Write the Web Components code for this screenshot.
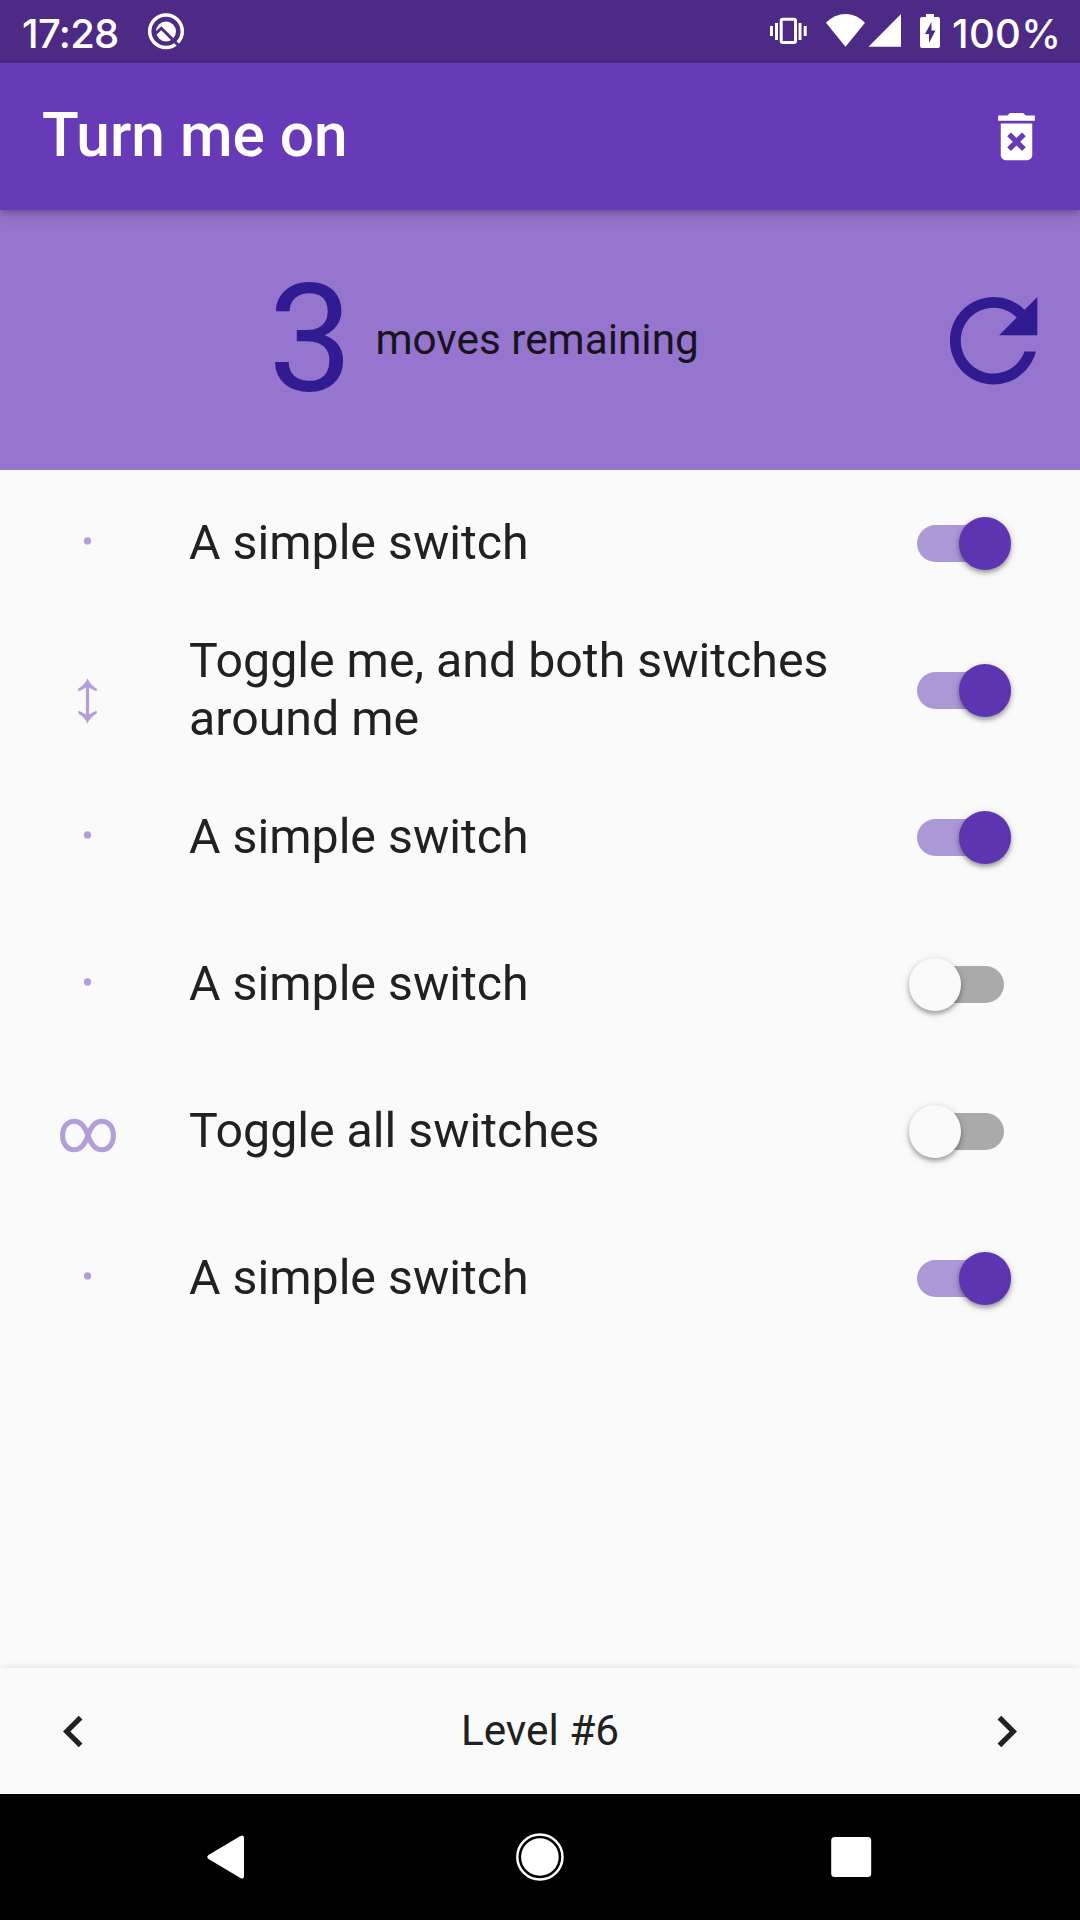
<!DOCTYPE html>
<html lang="en">
<head>
<meta charset="utf-8">
<title>Turn me on</title>
<style>
html,body{margin:0;padding:0;background:#fafafa}
body{font-family:Roboto,sans-serif;color:#212121}
</style>
</head>
<body>
<puzzle-app></puzzle-app>
<script>
const define = (name, html) => customElements.define(name, class extends HTMLElement {
  constructor() {
    super();
    this.attachShadow({mode: 'open'}).innerHTML = html;
  }
});

define('status-bar', `<style>
:host{display:flex;height:63px;background:#4d2a86;color:#fff;font:500 40px/63px Inter,sans-serif;box-sizing:border-box;padding:1.5px 22px 0 22px;flex:none}
svg{display:block;margin-top:-1.5px;flex:none}
.time{width:125px;letter-spacing:-.7px;white-space:nowrap}
.pct{letter-spacing:.3px;width:106px;white-space:nowrap}
.space{flex:1}
</style>
<span class="time">17:28</span>
<svg width="38" height="63" viewBox="147 0 38 63"><circle cx="166" cy="31.2" r="16.300" fill="none" stroke="#fff" stroke-width="3.500"/><circle cx="166" cy="31.500" r="10" fill="#fff"/><path d="M153.500 35.500L161.300 28.200L179.500 46.400" fill="none" stroke="#4d2a86" stroke-width="2.900"/></svg>
<span class="space"></span>
<svg width="183" height="63" viewBox="769 0 183 63" fill="#fff"><rect x="781.2" y="19.2" width="14.3" height="23.3" rx="1.5" fill="none" stroke="#fff" stroke-width="3"/><path d="M775 23h3v17h-3zM770 26h3v10h-3zM798.5 23h3v17h-3zM803.7 26h3v10h-3z"/><path d="M826 22.7Q834.5 14 845.5 14T865 22.7L845.5 46.7Z"/><path d="M868.5 46.7H901V14Z"/><path fill-rule="evenodd" d="M926 14h8v3h4a2 2 0 0 1 2 2v27a2 2 0 0 1-2 2h-16a2 2 0 0 1-2-2V19a2 2 0 0 1 2-2h4ZM931.5 22L925 34h4v9l6.5-12.5h-4Z"/></svg>
<span class="pct">100%</span>`);

define('app-bar', `<style>
:host{display:flex;height:147px;background:#673ab7;color:#fff;align-items:center;justify-content:space-between;box-sizing:border-box;padding:0 32px 0 42px;position:relative;z-index:1;box-shadow:0 3px 5px rgba(0,0,0,.19),0 5px 13px rgba(0,0,0,.13);flex:none}
h1{font:500 60.4px/71px Roboto,sans-serif;margin:-2px 0 0;white-space:nowrap}
svg{display:block}
</style><h1><slot></slot></h1>
<svg width="63" height="63" viewBox="0 0 24 24" fill="#fff"><path d="M6 19c0 1.1.9 2 2 2h8c1.1 0 2-.9 2-2V7H6v12zm2.46-7.12l1.41-1.41L12 12.59l2.12-2.12 1.41 1.41L13.41 14l2.12 2.12-1.41 1.41L12 15.41l-2.12 2.12-1.41-1.41L10.59 14l-2.13-2.12zM15.5 4l-1-1h-5l-1 1H5v2h14V4z"/></svg>`);

define('moves-panel', `<style>
:host{display:flex;height:260px;background:#9575cd;align-items:center;box-sizing:border-box;padding:0 21px 0 268px;flex:none}
.n{font-size:151px;line-height:177px;color:#311b92;margin-top:-2px}
.t{font-size:42.3px;line-height:50px;color:#17131f;margin-left:22.500px;flex:1;white-space:nowrap}
svg{display:block;margin-top:1px}
</style><span class="n"><slot name="count"></slot></span><span class="t"><slot></slot></span>
<svg width="131.25" height="131.25" viewBox="0 0 24 24" fill="#311b92"><path d="M17.65 6.35C16.2 4.9 14.21 4 12 4c-4.42 0-7.99 3.58-7.99 8s3.57 8 7.99 8c3.73 0 6.84-2.55 7.73-6h-2.08c-.82 2.33-3.04 4-5.65 4-3.31 0-6-2.69-6-6s2.69-6 6-6c1.66 0 3.14.69 4.22 1.78L13 11h7V4l-2.35 2.35z"/></svg>`);

define('toggle-switch', `<style>
:host{display:flex;width:105px;height:52.5px;align-items:center;justify-content:center;flex:none}
.track{display:flex;align-items:center;width:86.6px;height:36.75px;border-radius:19px;background:#aaa}
.thumb{width:52.5px;height:52.5px;border-radius:50%;background:#fafafa;flex:none;margin-left:-8px;box-shadow:0 3px 4px rgba(0,0,0,.28),0 2px 8px rgba(0,0,0,.16)}
:host([on]) .track{background:#ac98d6}
:host([on]) .thumb{background:#5e35b1;margin-left:42px}
</style><div class="track"><div class="thumb"></div></div>`);

const icons = {
  dot: '<circle cx="29.5" cy="26.9" r="3.6" fill="#b39ddb"/>',
  both: '<path d="M29.5 24V56" stroke="#b39ddb" stroke-width="3.2"/><path d="M29.5 17.5C31.5 22 35 25.5 38.700 27.5V30.3C35 29 32 27.5 29.5 25C27 27.5 24 29 20.3 30.3V27.5C24 25.5 27.5 22 29.5 17.5ZM29.5 62.5C27.5 58 24 54.5 20.3 52.5V49.7C24 51 27 52.5 29.5 55C32 52.5 35 51 38.7 49.7V52.5C35 54.5 31.5 58 29.5 62.5Z" fill="#b39ddb"/>',
  all: '<path d="M30 33.500C27 24.500 22.500 19.200 16.300 19.200C9.500 19.200 4.600 25 4.600 33.500C4.600 42 9.500 47.800 16.300 47.800C22.500 47.800 27 42.500 30 33.500C33 24.500 37.500 19.200 43.700 19.200C50.500 19.200 55.400 25 55.400 33.500C55.400 42 50.500 47.800 43.700 47.800C37.500 47.800 33 42.500 30 33.500Z" fill="none" stroke="#b39ddb" stroke-width="5.1"/>'
};

define('switch-row', `<style>
:host{display:flex;height:147px;align-items:center;box-sizing:border-box;padding:0 67.3px 0 58px;flex:none}
svg{display:block;width:60px;height:60px;flex:none;overflow:visible}
.label{margin:-2px 0 0 71px;flex:1;font-size:48.3px;line-height:58px}
</style><svg viewBox="0 0 60 60"></svg><span class="label"><slot></slot></span><toggle-switch></toggle-switch>`);

define('level-bar', `<style>
:host{display:flex;height:126px;align-items:center;justify-content:space-between;box-sizing:border-box;padding:0 42px;background:#fafafa;box-shadow:0 -1px 6px rgba(0,0,0,.09);flex:none}
svg{display:block}
span{font-size:42.3px;line-height:50px}
</style>
<svg width="63" height="63" viewBox="0 0 24 24" fill="#212121"><path d="M15.410 7.410L14 6l-6 6 6 6 1.410-1.410L10.830 12z"/></svg>
<span><slot></slot></span>
<svg width="63" height="63" viewBox="0 0 24 24" fill="#212121"><path d="M10 6L8.590 7.410 13.170 12l-4.580 4.590L10 18l6-6z"/></svg>`);

define('nav-bar', `<style>
:host{display:flex;height:126px;background:#000;align-items:center;justify-content:space-between;box-sizing:border-box;padding:0 204px 0 202px;flex:none}
svg{display:block}
</style>
<svg width="50" height="50" fill="#fff"><path d="M6.500 23Q4 25 6.500 27L38 45.700Q42 48 42 44V6Q42 2 38 4.300Z"/></svg>
<svg width="50" height="50"><circle cx="25.900" cy="25" r="22.600" fill="none" stroke="#fff" stroke-width="2.500"/><circle cx="25.900" cy="25" r="18.800" fill="#fff"/></svg>
<svg width="50" height="50" fill="#fff"><rect x="5.200" y="5" width="40" height="40" rx="3.500"/></svg>`);

customElements.define('puzzle-app', class extends HTMLElement {
  constructor() {
    super();
    this.attachShadow({mode: 'open'}).innerHTML = `<style>
:host{display:flex;flex-direction:column;width:1080px;height:1920px;overflow:hidden;background:#fafafa}
main{display:flex;flex-direction:column;flex:1}
</style>
<status-bar></status-bar>
<app-bar>Turn me on</app-bar>
<moves-panel><span slot="count">3</span>moves remaining</moves-panel>
<main>
<switch-row icon="dot" on>A simple switch</switch-row>
<switch-row icon="both" on>Toggle me, and both switches around me</switch-row>
<switch-row icon="dot" on>A simple switch</switch-row>
<switch-row icon="dot">A simple switch</switch-row>
<switch-row icon="all">Toggle all switches</switch-row>
<switch-row icon="dot" on>A simple switch</switch-row>
</main>
<level-bar>Level #6</level-bar>
<nav-bar></nav-bar>`;
    for (const row of this.shadowRoot.querySelectorAll('switch-row')) {
      row.shadowRoot.querySelector('svg').innerHTML = icons[row.getAttribute('icon')];
      row.shadowRoot.querySelector('toggle-switch').toggleAttribute('on', row.hasAttribute('on'));
    }
  }
});
</script>
</body>
</html>
